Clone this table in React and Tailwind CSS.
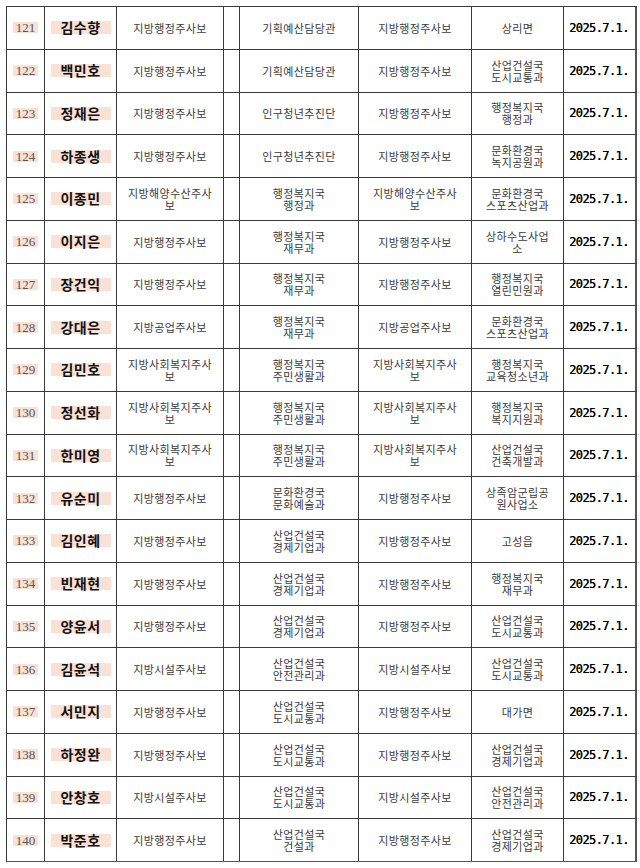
import React from "react";

const rows = [
  ["121", "김수향", "지방행정주사보", "기획예산담당관", "지방행정주사보", "상리면"],
  ["122", "백민호", "지방행정주사보", "기획예산담당관", "지방행정주사보", "산업건설국\n도시교통과"],
  ["123", "정재은", "지방행정주사보", "인구청년추진단", "지방행정주사보", "행정복지국\n행정과"],
  ["124", "하종생", "지방행정주사보", "인구청년추진단", "지방행정주사보", "문화환경국\n녹지공원과"],
  ["125", "이종민", "지방해양수산주사\n보", "행정복지국\n행정과", "지방해양수산주사\n보", "문화환경국\n스포츠산업과"],
  ["126", "이지은", "지방행정주사보", "행정복지국\n재무과", "지방행정주사보", "상하수도사업\n소"],
  ["127", "장건익", "지방행정주사보", "행정복지국\n재무과", "지방행정주사보", "행정복지국\n열린민원과"],
  ["128", "강대은", "지방공업주사보", "행정복지국\n재무과", "지방공업주사보", "문화환경국\n스포츠산업과"],
  ["129", "김민호", "지방사회복지주사\n보", "행정복지국\n주민생활과", "지방사회복지주사\n보", "행정복지국\n교육청소년과"],
  ["130", "정선화", "지방사회복지주사\n보", "행정복지국\n주민생활과", "지방사회복지주사\n보", "행정복지국\n복지지원과"],
  ["131", "한미영", "지방사회복지주사\n보", "행정복지국\n주민생활과", "지방사회복지주사\n보", "산업건설국\n건축개발과"],
  ["132", "유순미", "지방행정주사보", "문화환경국\n문화예술과", "지방행정주사보", "상족암군립공\n원사업소"],
  ["133", "김인혜", "지방행정주사보", "산업건설국\n경제기업과", "지방행정주사보", "고성읍"],
  ["134", "빈재현", "지방행정주사보", "산업건설국\n경제기업과", "지방행정주사보", "행정복지국\n재무과"],
  ["135", "양윤서", "지방행정주사보", "산업건설국\n경제기업과", "지방행정주사보", "산업건설국\n도시교통과"],
  ["136", "김윤석", "지방시설주사보", "산업건설국\n안전관리과", "지방시설주사보", "산업건설국\n도시교통과"],
  ["137", "서민지", "지방행정주사보", "산업건설국\n도시교통과", "지방행정주사보", "대가면"],
  ["138", "하정완", "지방행정주사보", "산업건설국\n도시교통과", "지방행정주사보", "산업건설국\n경제기업과"],
  ["139", "안창호", "지방시설주사보", "산업건설국\n도시교통과", "지방시설주사보", "산업건설국\n안전관리과"],
  ["140", "박준호", "지방행정주사보", "산업건설국\n건설과", "지방행정주사보", "산업건설국\n경제기업과"],
];

const kr = "font-['Noto_Sans_CJK_KR','Noto_Sans',sans-serif]";

function TextCell({ text, className = "" }) {
  return (
    <div
      className={`flex items-center justify-center border-r border-[#3a3a3a] text-center whitespace-pre-line text-[11px] leading-[12px] tracking-[0.4px] text-[#3a3a3a] ${kr} ${className}`}
    >
      {text}
    </div>
  );
}

export default function App() {
  return (
    <div className="min-h-[868px] w-[640px] bg-white pt-[6px] pl-[6px]">
      <div className="flex w-[631px] flex-col border-l border-t border-[#3a3a3a]">
        {rows.map((r, i) => (
          <div
            key={r[0]}
            className={`grid h-[42.75px] grid-cols-[38px_72px_107px_16px_119px_113px_92px_73px] border-b ${
              i === rows.length - 1 ? "border-[#555]" : "border-[#3a3a3a]"
            }`}
          >
            <div className="flex items-center justify-center border-r border-[#3a3a3a]">
              <span className="inline-block h-[11px] bg-[#f9e1d6] px-[3px] font-['Liberation_Serif',serif] text-[13px] leading-[11px] text-[#555]">
                {r[0]}
              </span>
            </div>
            <div className="flex items-center justify-center border-r border-[#3a3a3a]">
              <span
                className={`inline-block h-[13px] w-[60px] bg-[#f9e1d6] text-center text-[14px] font-bold leading-[13px] tracking-[0.5px] text-[#111] ${kr}`}
              >
                {r[1]}
              </span>
            </div>
            <TextCell text={r[2]} />
            <div className="border-r border-[#3a3a3a]" />
            <TextCell text={r[3]} />
            <TextCell text={r[4]} />
            <TextCell text={r[5]} />
            <div className="flex items-center justify-center border-r-2 border-[#555] pr-[1px] font-['DejaVu_Sans_Mono',monospace] text-[12px] tracking-[-0.6px] text-[#000] [text-shadow:0_0_0.4px_#000]">
              2025.7.1.
            </div>
          </div>
        ))}
      </div>
    </div>
  );
}
